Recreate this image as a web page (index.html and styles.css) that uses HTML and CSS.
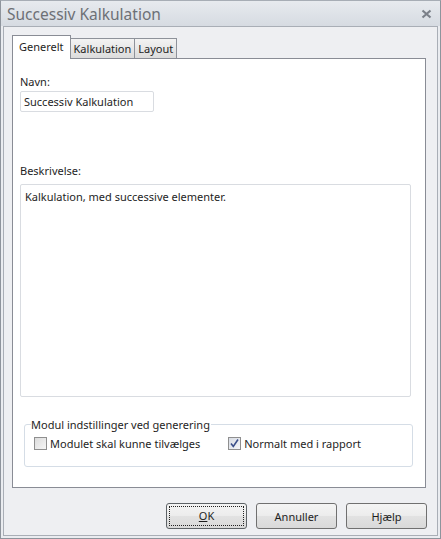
FILE: index.html
```html
<!DOCTYPE html>
<html lang="da">
<head>
  <meta charset="UTF-8">
  <title>Successiv Kalkulation</title>
  <link rel="stylesheet" href="styles.css">
</head>
<body>
  <div class="window">
    <div class="titlebar">
      <span class="title">Successiv Kalkulation</span>
      <span class="close">
        <svg width="11" height="10" viewBox="0 0 11 10">
          <path d="M1.5 1.5 L9.5 8.5 M9.5 1.5 L1.5 8.5" stroke="#7b8089" stroke-width="2.2" fill="none"/>
        </svg>
      </span>
    </div>
    <div class="client">
      <div class="tabs">
        <div class="tab active">Generelt</div>
        <div class="tab">Kalkulation</div>
        <div class="tab">Layout</div>
      </div>
      <div class="panel">
        <label class="field-label">Navn:</label>
        <div class="input">Successiv Kalkulation</div>
        <label class="field-label desc-label">Beskrivelse:</label>
        <div class="textarea">Kalkulation, med successive elementer.</div>
        <fieldset class="group">
          <legend>Modul indstillinger ved generering</legend>
          <div class="checks">
            <span class="check"><span class="box"></span>Modulet skal kunne tilvælges</span>
            <span class="check second"><span class="box checked">
              <svg width="11" height="11" viewBox="0 0 11 11">
                <path d="M2 5.5 L4.3 8.5 L9 1.5" stroke="#3b4f8a" stroke-width="1.6" fill="none"/>
              </svg>
            </span>Normalt med i rapport</span>
          </div>
        </fieldset>
      </div>
      <div class="buttons">
        <button class="button default"><span class="focus"><u>O</u>K</span></button>
        <button class="button">Annuller</button>
        <button class="button">Hjælp</button>
      </div>
    </div>
  </div>
</body>
</html>
```

FILE: styles.css
```css
body {
  margin: 0;
  padding: 0;
  font-family: "Noto Sans", "DejaVu Sans", sans-serif;
  font-size: 11px;
  color: #1e1e1e;
  background-color: #eeeff2;
}
.window {
  width: 441px;
  height: 539px;
  box-sizing: border-box;
  border: 1px solid #8e949c;
  border-top-color: #a7adb5;
  background-color: #eaecf0;
  display: flex;
  flex-direction: column;
}
.titlebar {
  height: 25px;
  display: flex;
  align-items: center;
  justify-content: space-between;
  padding: 0 8px 0 6px;
  background: linear-gradient(#e7eaee, #d6dbe2);
}
.title {
  font-size: 15.5px;
  color: #6d7076;
}
.close {
  display: flex;
  margin-top: 1px;
}
.client {
  flex: 1;
  margin: 0 2px 2px 2px;
  border: 1px solid #a9aeb6;
  background-color: #eeeff2;
  padding: 8px 11px 0 8px;
  display: flex;
  flex-direction: column;
}
.tabs {
  display: flex;
  align-items: flex-end;
  height: 23px;
  position: relative;
  z-index: 1;
}
.tab {
  height: 19px;
  padding: 0 3px;
  line-height: 19px;
  border: 1px solid #8e929a;
  border-bottom: none;
  background: linear-gradient(#f3f3f3, #dcdcdc);
  margin-left: -1px;
}
.tab.active {
  padding: 0 6px;
  margin-left: 0;
  line-height: 21px;
  background-color: #ffffff;
  background-image: none;
  border-color: #898c95;
  margin-bottom: -1px;
  height: 23px;
}
.panel {
  height: 430px;
  box-sizing: border-box;
  border: 1px solid #898c95;
  background-color: #ffffff;
  padding: 15px 14px 0 7px;
}
.field-label {
  display: block;
  line-height: 15px;
}
.input {
  width: 134px;
  height: 21px;
  box-sizing: border-box;
  margin-top: 2px;
  border: 1px solid #d9dce1;
  border-radius: 2px;
  padding: 0 3px;
  line-height: 19px;
}
.desc-label {
  margin-top: 51px;
}
.textarea {
  height: 213px;
  box-sizing: border-box;
  margin-top: 6px;
  border: 1px solid #d9dce1;
  border-radius: 2px;
  padding: 4px 4px;
  line-height: 16px;
}
.group {
  margin: 20px -2px 0 4px;
  height: 50px;
  box-sizing: border-box;
  border: 1px solid #d5dde6;
  border-radius: 3px;
  padding: 0 9px;
}
.group legend {
  padding: 0 1px 0 0;
  margin-left: -3px;
  line-height: 15px;
}
.checks {
  display: flex;
  margin-top: 4px;
}
.check {
  display: flex;
  align-items: center;
  gap: 3px;
}
.check.second {
  margin-left: 28px;
}
.box {
  width: 11px;
  height: 11px;
  border: 1px solid #8f8f8f;
  background: linear-gradient(135deg, #dcdcdc, #f6f6f6);
  display: flex;
  align-items: center;
  justify-content: center;
}
.box.checked {
  background: linear-gradient(135deg, #d8dce4, #f4f5f8);
}
.buttons {
  display: flex;
  justify-content: flex-end;
  gap: 9px;
  margin: 15px -1px 0 0;
}
.button {
  width: 81px;
  height: 26px;
  font-family: "Noto Sans", "DejaVu Sans", sans-serif;
  font-size: 11px;
  color: #1e1e1e;
  border: 1px solid #707070;
  border-radius: 3px;
  background: linear-gradient(#f4f4f4 0%, #ececec 50%, #e2e2e2 51%, #d9d9d9 100%);
  padding: 0;
}
.button.default {
  border-color: #5d6266;
  padding: 2px;
}
.focus {
  display: block;
  height: 100%;
  box-sizing: border-box;
  border: 1px dotted #222;
  line-height: 18px;
}
```
